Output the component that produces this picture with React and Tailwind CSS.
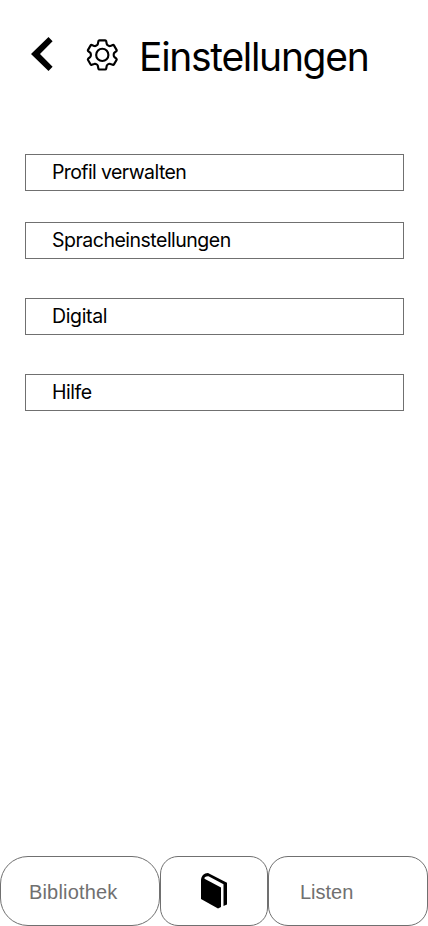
import React from "react";

const settings = [
  { label: "Profil verwalten", gap: "mt-0", spacing: "tracking-[-0.6px]" },
  { label: "Spracheinstellungen", gap: "mt-[31px]", spacing: "tracking-[-0.5px]" },
  { label: "Digital", gap: "mt-[39px]", spacing: "tracking-[-0.35px]" },
  { label: "Hilfe", gap: "mt-[39px]", spacing: "tracking-[-0.45px]" },
];

function BackIcon() {
  return (
    <svg width="22" height="34" viewBox="0 0 22 34" aria-hidden="true">
      <path d="M17.500 0 21.600 4.200 9 17.100 21.600 29.800 17.500 34 0 17.100Z" />
    </svg>
  );
}

function GearIcon() {
  return (
    <svg width="32" height="34" viewBox="-0.8 -0.9 33 35" fill="none" stroke="black" strokeWidth="2.2" strokeLinejoin="round" aria-hidden="true">
      <path d="M13 1.500H19Q19.800 1.500 20 2.300L20.600 5.300Q20.800 6.200 21.800 6.700L22.600 7.100Q23.500 7.600 24.400 7.200L26.800 6.300Q27.600 6 28 6.700L30.700 11.300Q31.100 12 30.500 12.600L28.600 14.200Q27.800 14.900 27.800 15.800V17.200Q27.800 18.100 28.600 18.800L30.500 20.400Q31.100 21 30.700 21.700L28 26.300Q27.600 27 26.800 26.700L24.400 25.800Q23.500 25.400 22.600 25.900L21.800 26.300Q20.800 26.800 20.600 27.700L20 30.700Q19.800 31.500 19 31.500H13Q12.200 31.500 12 30.700L11.400 27.700Q11.200 26.800 10.200 26.300L9.400 25.900Q8.500 25.400 7.600 25.800L5.200 26.700Q4.400 27 4 26.300L1.300 21.700Q.9 21 1.500 20.400L3.400 18.800Q4.200 18.100 4.200 17.200V15.800Q4.200 14.900 3.400 14.200L1.500 12.600Q.9 12 1.300 11.300L4 6.700Q4.400 6 5.200 6.300L7.600 7.200Q8.500 7.600 9.400 7.100L10.200 6.700Q11.200 6.200 11.400 5.300L12 2.300Q12.200 1.500 13 1.500Z" />
      <circle cx="16" cy="16.500" r="6.300" />
    </svg>
  );
}

function BookIcon() {
  return (
    <svg width="28" height="38" viewBox="0 0 28 38" aria-hidden="true">
      <path d="M1 8.500C1 4 4 1 8 1L27 10.700V32.500L23.500 34V12.300L8.500 4.300C6 4 4 5.500 4.500 6.700L21 15.500V35L18 36.500 1 27Z" />
    </svg>
  );
}

export default function App() {
  return (
    <main className="flex h-[926px] w-[428px] flex-col overflow-hidden bg-white font-['Inter',sans-serif] text-black">
      <header className="flex h-[154px] items-start pl-[31px]">
        <button className="mt-[37px]" aria-label="Zurück"><BackIcon /></button>
        <div className="mt-[38px] ml-[33px]"><GearIcon /></div>
        <h1 className="mt-[33px] ml-[21px] text-[39px] font-normal leading-[48px] tracking-[-1.3px] whitespace-nowrap">Einstellungen</h1>
      </header>
      <nav className="flex flex-1 flex-col pr-[24px] pl-[25px]">
        {settings.map(({ label, gap, spacing }) => (
          <button key={label} className={`flex h-[37px] w-full shrink-0 items-center border border-[#707070] pb-px pl-[26px] text-left text-[19.5px] font-normal leading-6 whitespace-nowrap ${gap} ${spacing}`}>
            {label}
          </button>
        ))}
      </nav>
      <footer className="flex h-[70px] shrink-0 font-['Liberation_Sans',sans-serif] text-[20px] text-[#707070]">
        <button className="w-40 rounded-[28px] border border-[#707070] pt-[2px] pl-7 text-left tracking-[0.17px]">Bibliothek</button>
        <button className="flex w-27 items-center justify-center rounded-[18px] border border-[#707070] text-black" aria-label="Bücher"><BookIcon /></button>
        <button className="w-40 rounded-[20px] border border-[#707070] pt-[2px] pl-[31px] text-left">Listen</button>
      </footer>
    </main>
  );
}
